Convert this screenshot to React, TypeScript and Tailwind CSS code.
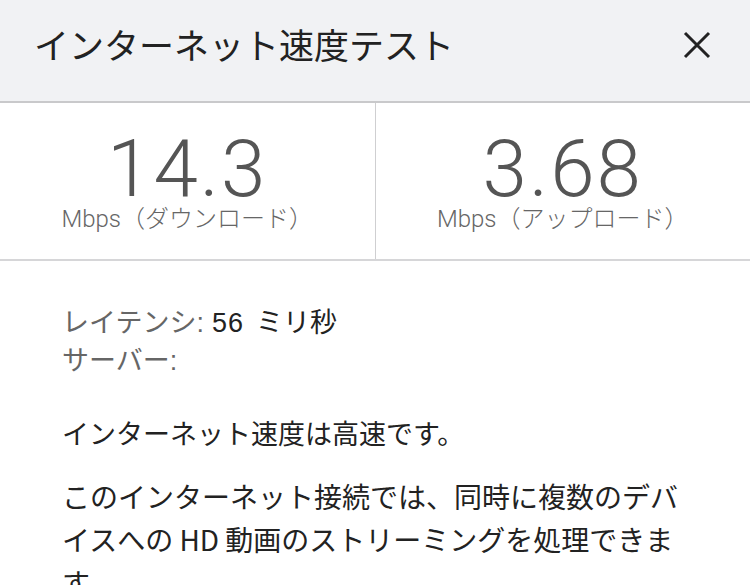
import React from "react";

const jp = { fontFamily: '"Noto Sans CJK JP", "Noto Sans", sans-serif' };
const num = { fontFamily: 'Roboto, "Noto Sans CJK JP", sans-serif' };
const latin = { fontFamily: '"Liberation Sans", "Noto Sans CJK JP", sans-serif' };

function Stat({ value, label }: { value: string; label: string }) {
  return (
    <div className="flex-1 flex flex-col items-center pt-[34px]">
      <div className="text-[80px] leading-[64px] font-light text-[#555555] tracking-[2px]" style={num}>
        {value}
      </div>
      <div className="text-[24px] leading-[26px] text-[#666666] mt-[3px]" style={jp}>
        <span className="font-light" style={num}>Mbps</span>
        <span className="font-light">（{label}）</span>
      </div>
    </div>
  );
}

export default function App() {
  return (
    <div className="w-[750px] h-[585px] overflow-hidden bg-white" style={jp}>
      {/* header */}
      <div className="h-[103px] bg-[#f1f2f4] border-b-2 border-[#c9c9cb] flex items-center pl-[34px] pr-[38px] pb-[12px]">
        <div className="flex-1 text-[35px] text-[#222222]">インターネット速度テスト</div>
        <svg width="30" height="30" viewBox="0 0 30 30" className="text-[#222222]">
          <path d="M3 3 L27 27 M27 3 L3 27" stroke="currentColor" strokeWidth="3" />
        </svg>
      </div>

      {/* stats */}
      <div className="h-[158px] flex border-b-2 border-[#d6d6d8]">
        <Stat value="14.3" label="ダウンロード" />
        <div className="w-[1px] bg-[#cfcfd1]" />
        <Stat value="3.68" label="アップロード" />
      </div>

      {/* details */}
      <div className="px-[62px] pt-[42px]">
        <div className="text-[27px] leading-[36px] text-[#666666]">
          レイテンシ<span style={latin}>:</span>
          <span className="text-[#222222] ml-[8px]">
            <span className="tracking-[1px]" style={latin}>56</span>
            <span className="ml-[12px]">ミリ秒</span>
          </span>
        </div>
        <div className="text-[27px] leading-[36px] text-[#666666]">
          サーバー<span style={latin}>:</span>
        </div>
        <div className="text-[27px] leading-[44px] text-[#222222] mt-[32px]">インターネット速度は高速です。</div>
        <div className="text-[28px] leading-[43px] text-[#222222] mt-[20px] w-[640px]">
          このインターネット接続では、同時に複数のデバイスへの HD 動画のストリーミングを処理できます。
        </div>
      </div>
    </div>
  );
}
